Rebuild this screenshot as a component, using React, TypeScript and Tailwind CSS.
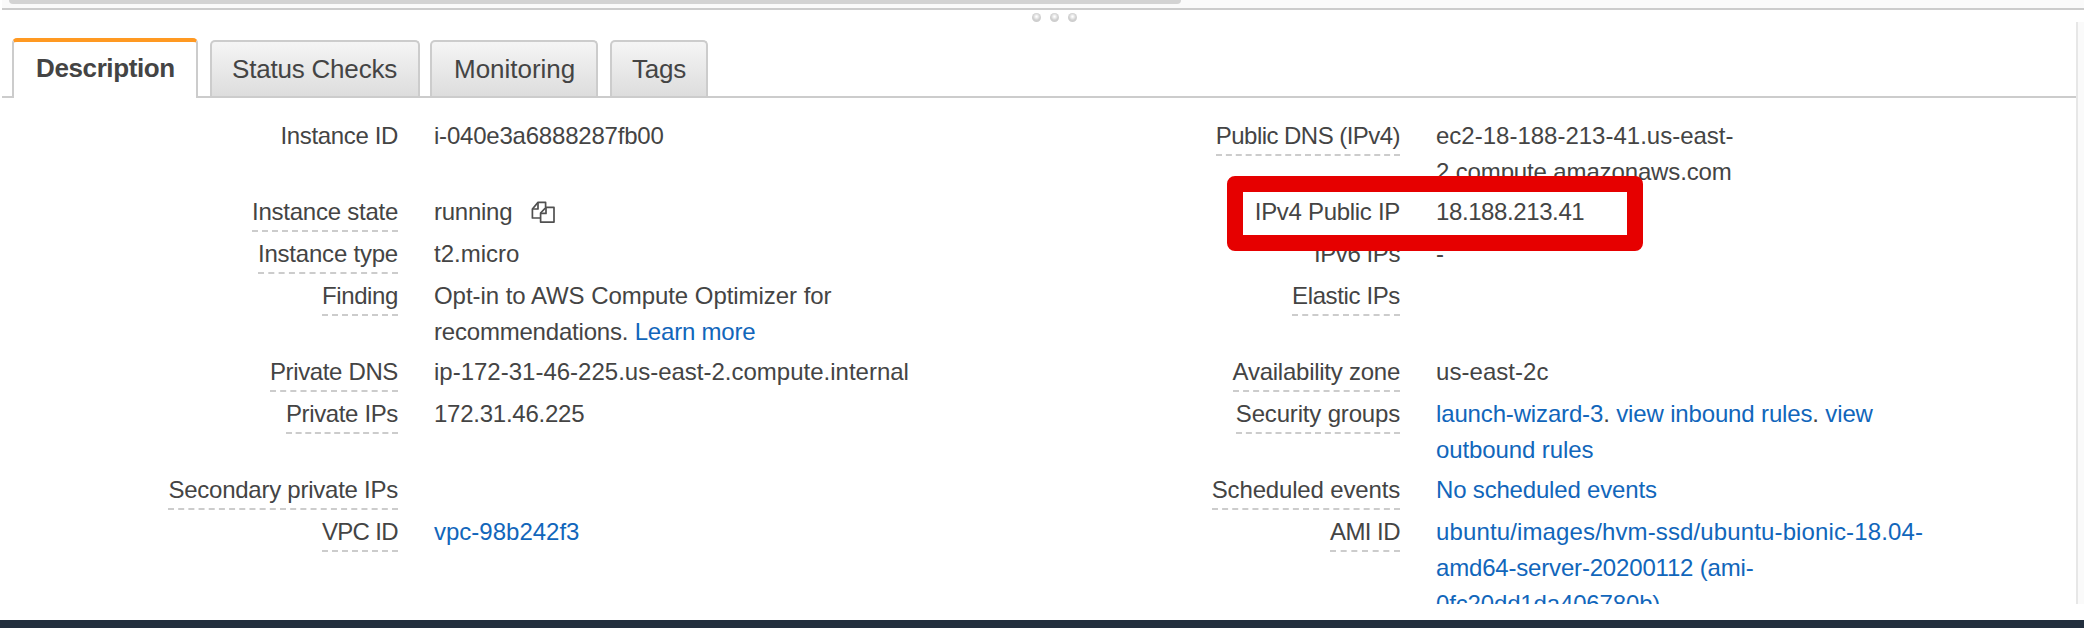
import type { ReactNode } from "react";
import clsx from "clsx";

type Field = {
  label: string;
  labelClass?: string;
  hint?: boolean; // dashed underline, opens a help popover
  value?: ReactNode;
};

function CopyIcon() {
  return (
    <svg
      className="ml-[19px] inline-block h-[22px] w-6 align-[-3px]"
      viewBox="0 0 24 22"
      fill="none"
      stroke="#505050"
      strokeWidth="1.7"
      strokeLinejoin="round"
    >
      <path d="M9 17H1.4V8L7 1.4h7.6V6" />
      <path d="M1.4 8H7V1.4" />
      <path d="M9.6 12L15 6.4h8V21.1H9.6Z" fill="#fff" />
      <path d="M9.6 12.4H15V6.4" />
    </svg>
  );
}

function Link({ children }: { children: ReactNode }) {
  return (
    <a href="#" className="text-[#1166bb]">
      {children}
    </a>
  );
}

function Line({ children, className }: { children: ReactNode; className?: string }) {
  return <div className={clsx("whitespace-nowrap", className)}>{children}</div>;
}

function Tab({ label, active, className }: { label: string; active?: boolean; className: string }) {
  return (
    <button
      className={clsx(
        "rounded-t-[5px] border-x-2 text-left text-[26px] leading-[36px] whitespace-nowrap",
        active
          ? "-mb-0.5 h-[60px] border-t-4 border-x-[#ccc] border-t-[#ff9922] bg-white font-bold"
          : "h-14 border-t-2 border-[#ccc] bg-linear-to-b from-[#f5f5f5] to-[#dddddd]",
        className
      )}
    >
      {label}
    </button>
  );
}

// Left and right fields share a row, so both sides grow together
const rows: [Field, Field][] = [
  [
    {
      label: "Instance ID",
      labelClass: "tracking-[-0.35px]",
      value: <Line className="tracking-[-0.21px]">i-040e3a6888287fb00</Line>,
    },
    {
      label: "Public DNS (IPv4)",
      labelClass: "tracking-[-0.54px]",
      hint: true,
      value: (
        <>
          <Line className="tracking-normal">ec2-18-188-213-41.us-east-</Line>
          <Line className="tracking-[-0.14px]">2.compute.amazonaws.com</Line>
        </>
      ),
    },
  ],
  [
    {
      label: "Instance state",
      hint: true,
      value: (
        <Line>
          running
          <CopyIcon />
        </Line>
      ),
    },
    {
      label: "IPv4 Public IP",
      labelClass: "tracking-[-0.3px]",
      value: <Line className="tracking-[-0.4px]">18.188.213.41</Line>,
    },
  ],
  [
    {
      label: "Instance type",
      labelClass: "tracking-[-0.21px]",
      hint: true,
      value: <Line className="tracking-normal">t2.micro</Line>,
    },
    { label: "IPv6 IPs", labelClass: "tracking-[-0.42px]", value: "-" },
  ],
  [
    {
      label: "Finding",
      labelClass: "tracking-[-0.38px]",
      hint: true,
      value: (
        <>
          <Line className="tracking-[-0.05px]">Opt-in to AWS Compute Optimizer for</Line>
          <Line className="tracking-[-0.2px]">
            recommendations. <Link>Learn more</Link>
          </Line>
        </>
      ),
    },
    { label: "Elastic IPs", labelClass: "tracking-[-0.37px]", hint: true },
  ],
  [
    {
      label: "Private DNS",
      labelClass: "tracking-[-0.36px]",
      hint: true,
      value: <Line className="tracking-normal">ip-172-31-46-225.us-east-2.compute.internal</Line>,
    },
    {
      label: "Availability zone",
      hint: true,
      value: <Line className="tracking-[0.05px]">us-east-2c</Line>,
    },
  ],
  [
    {
      label: "Private IPs",
      labelClass: "tracking-[-0.36px]",
      hint: true,
      value: "172.31.46.225",
    },
    {
      label: "Security groups",
      labelClass: "tracking-[-0.17px]",
      hint: true,
      value: (
        <>
          <Line className="tracking-[-0.15px]">
            <Link>launch-wizard-3</Link>. <Link>view inbound rules</Link>. <Link>view</Link>
          </Line>
          <Line className="tracking-[-0.1px]">
            <Link>outbound rules</Link>
          </Line>
        </>
      ),
    },
  ],
  [
    { label: "Secondary private IPs", hint: true },
    {
      label: "Scheduled events",
      labelClass: "tracking-[-0.16px]",
      hint: true,
      value: (
        <Line className="tracking-[-0.18px]">
          <Link>No scheduled events</Link>
        </Line>
      ),
    },
  ],
  [
    {
      label: "VPC ID",
      labelClass: "tracking-[-0.65px]",
      hint: true,
      value: (
        <Line className="tracking-normal">
          <Link>vpc-98b242f3</Link>
        </Line>
      ),
    },
    {
      label: "AMI ID",
      labelClass: "tracking-[-0.55px]",
      hint: true,
      value: (
        <Link>
          <Line className="tracking-[0.13px]">ubuntu/images/hvm-ssd/ubuntu-bionic-18.04-</Line>
          <Line className="tracking-[-0.18px]">amd64-server-20200112 (ami-</Line>
          <Line className="tracking-[-0.15px]">0fc20dd1da406780b)</Line>
        </Link>
      ),
    },
  ],
];

function FieldCells({ field }: { field: Field }) {
  return (
    <>
      <div className="text-right">
        <span
          className={clsx(
            "inline-block h-[38px] border-b-2 align-top",
            field.hint ? "border-dashed border-[#ccc]" : "border-transparent",
            field.labelClass
          )}
        >
          {field.label}
        </span>
      </div>
      <div className="pl-9">{field.value}</div>
    </>
  );
}

export default function App() {
  return (
    <div className="relative flex h-[628px] w-[2084px] flex-col overflow-hidden bg-white font-['Liberation_Sans',Arial,sans-serif] text-[#444]">
      {/* Horizontal scrollbar of the table above */}
      <div className="ml-0.5 h-2.5 shrink-0 border-b-2 border-[#ccc] bg-[#fafafa]">
        <div className="ml-[7px] h-1 w-[1172px] rounded-b-full bg-[#d3d3d3]" />
      </div>

      {/* Splitter handle */}
      <div className="flex h-3 shrink-0 gap-[9px] pt-[3px] pl-[1032px]">
        {[0, 1, 2].map((i) => (
          <span
            key={i}
            className="size-[9px] shrink-0 rounded-full bg-[radial-gradient(circle_at_50%_40%,#fff_5%,#d0d0d0_50%,#c8c8c8)]"
          />
        ))}
      </div>

      <div className="flex h-[582px] shrink-0">
        <div className="flex min-w-0 flex-1 flex-col overflow-hidden pl-0.5">
          <div className="flex h-[76px] shrink-0 items-end border-b-2 border-[#ccc] pl-2.5">
            <Tab label="Description" active className="w-[186px] pb-1 pl-[22px] tracking-[-0.38px]" />
            <Tab label="Status Checks" className="ml-3 w-[210px] pl-5 tracking-[-0.2px]" />
            <Tab label="Monitoring" className="ml-2.5 w-[168px] pl-[22px] tracking-[-0.02px]" />
            <Tab label="Tags" className="ml-3 w-[98px] pl-5 tracking-[-0.2px]" />
          </div>

          <div className="grid shrink-0 grid-cols-[396px_560px_442px_1fr] pt-5 text-[24px] leading-[36px] tracking-[-0.25px]">
            {rows.map(([left, right]) => (
              <div key={left.label} className="col-span-4 grid grid-cols-subgrid pb-1">
                <FieldCells field={left} />
                <FieldCells field={right} />
              </div>
            ))}
          </div>
        </div>
        <div className="w-2 shrink-0 border-l-2 border-[#e7e7e7] bg-[#fafafa]" />
      </div>

      <div className="mt-4 h-2 shrink-0 bg-[#232f3e]" />

      {/* Highlight around the public IP */}
      <div className="pointer-events-none absolute top-[176px] left-[1227px] h-[75px] w-[416px] rounded-lg border-16 border-[#e60000]" />
    </div>
  );
}
